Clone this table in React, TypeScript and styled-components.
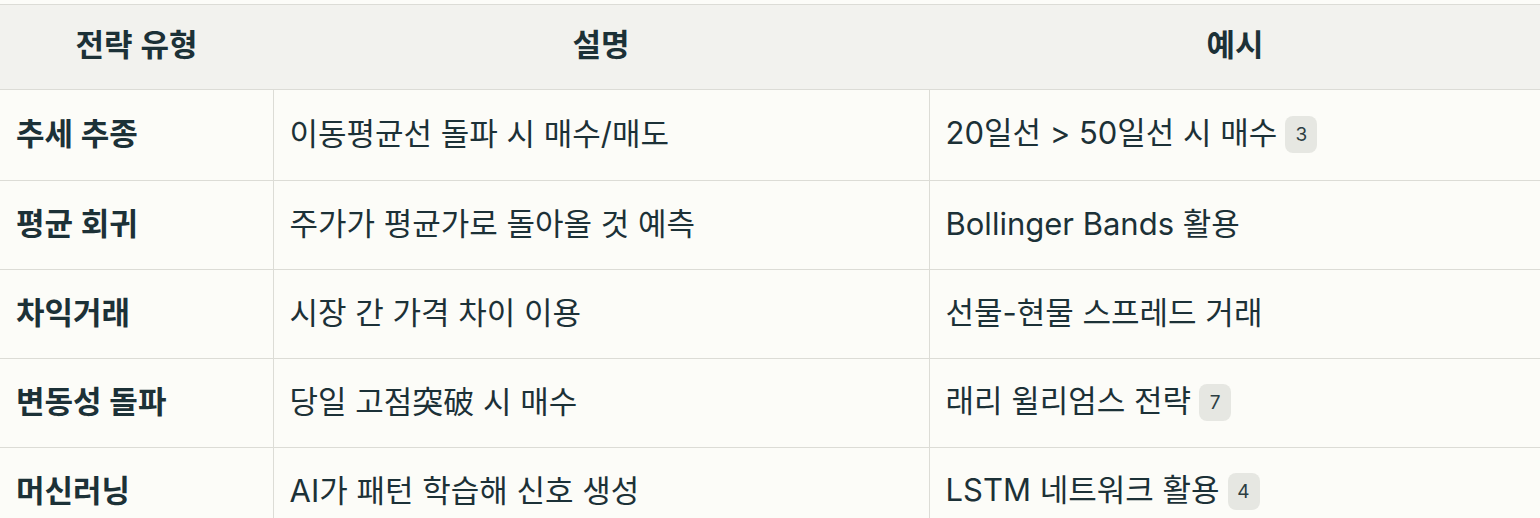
import styled, { createGlobalStyle } from "styled-components";

const GlobalStyle = createGlobalStyle`
  body {
    margin: 0;
    background: #fcfcf8;
    font-family: Inter, "Noto Sans CJK KR", sans-serif;
    color: #1c3137;
  }
`;

const Wrapper = styled.div`
  padding-top: 4px;
  width: 1540px;
  overflow: hidden;
`;

const Table = styled.table`
  width: 1541px;
  border-collapse: collapse;
  table-layout: fixed;
  font-size: 31px;
  line-height: 1.2;
`;

const HeadCell = styled.th<{ $width: number }>`
  box-sizing: border-box;
  width: ${(p) => p.$width}px;
  height: 85px;
  background: #f2f2ee;
  font-weight: 600;
  text-align: center;
  border-top: 1px solid #dcdcd6;
  border-bottom: 1px solid #dcdcd6;
  padding: 0 16px 4px;
`;

const Row = styled.tr`
  height: 89px;
  border-bottom: 1px solid #dcdcd6;

  &:first-child {
    height: 91px;
  }
`;

const Cell = styled.td<{ $strong?: boolean }>`
  box-sizing: border-box;
  padding: 0 16px 3px;
  font-weight: ${(p) => (p.$strong ? 600 : 400)};
  border-left: 1px solid #dcdcd6;
  white-space: nowrap;

  &:first-child {
    border-left: none;
  }
`;

const Badge = styled.span`
  display: inline-flex;
  align-items: center;
  justify-content: center;
  min-width: 32px;
  height: 37px;
  margin-left: 8px;
  border-radius: 8px;
  background: #e6e7e2;
  font-size: 19px;
  vertical-align: 3px;
  color: #2c3e42;
`;

const rows = [
  { type: "추세 추종", desc: "이동평균선 돌파 시 매수/매도", ex: "20일선 > 50일선 시 매수", ref: "3" },
  { type: "평균 회귀", desc: "주가가 평균가로 돌아올 것 예측", ex: "Bollinger Bands 활용" },
  { type: "차익거래", desc: "시장 간 가격 차이 이용", ex: "선물-현물 스프레드 거래" },
  { type: "변동성 돌파", desc: "당일 고점突破 시 매수", ex: "래리 윌리엄스 전략", ref: "7" },
  { type: "머신러닝", desc: "AI가 패턴 학습해 신호 생성", ex: "LSTM 네트워크 활용", ref: "4" },
];

export default function App() {
  return (
    <Wrapper>
      <GlobalStyle />
      <Table>
        <thead>
          <tr>
            <HeadCell $width={273}>전략 유형</HeadCell>
            <HeadCell $width={656}>설명</HeadCell>
            <HeadCell $width={612}>예시</HeadCell>
          </tr>
        </thead>
        <tbody>
          {rows.map((r) => (
            <Row key={r.type}>
              <Cell $strong>{r.type}</Cell>
              <Cell>{r.desc}</Cell>
              <Cell>
                {r.ex}
                {r.ref && <Badge>{r.ref}</Badge>}
              </Cell>
            </Row>
          ))}
        </tbody>
      </Table>
    </Wrapper>
  );
}
